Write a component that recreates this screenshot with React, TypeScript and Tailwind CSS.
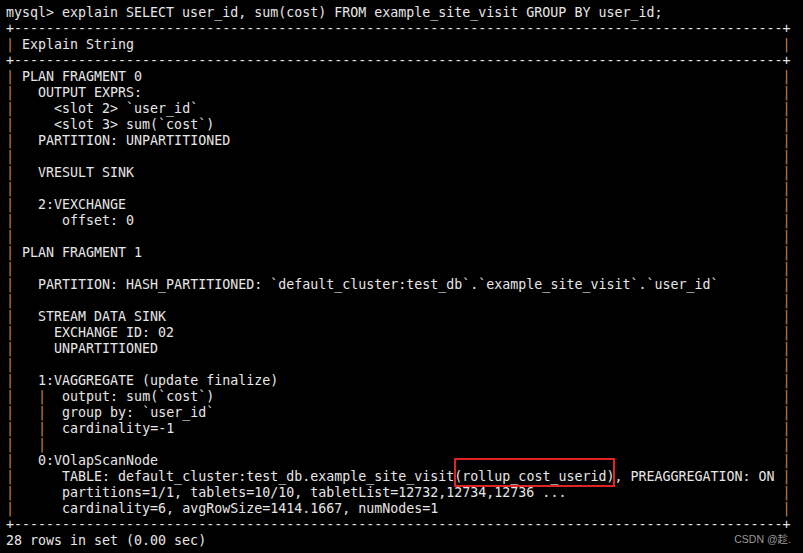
const border = "+" + "-".repeat(96) + "+";

const rows = [
  "PLAN FRAGMENT 0",
  "  OUTPUT EXPRS:",
  "    <slot 2> `user_id`",
  "    <slot 3> sum(`cost`)",
  "  PARTITION: UNPARTITIONED",
  "",
  "  VRESULT SINK",
  "",
  "  2:VEXCHANGE",
  "     offset: 0",
  "",
  "PLAN FRAGMENT 1",
  "",
  "  PARTITION: HASH_PARTITIONED: `default_cluster:test_db`.`example_site_visit`.`user_id`",
  "",
  "  STREAM DATA SINK",
  "    EXCHANGE ID: 02",
  "    UNPARTITIONED",
  "",
  "  1:VAGGREGATE (update finalize)",
  "  |  output: sum(`cost`)",
  "  |  group by: `user_id`",
  "  |  cardinality=-1",
  "  |",
  "  0:VOlapScanNode",
  "TABLE",
  "     partitions=1/1, tablets=10/10, tabletList=12732,12734,12736 ...",
  "     cardinality=6, avgRowSize=1414.1667, numNodes=1",
];

function Pipes({ text }: { text: string }) {
  return (
    <>
      {text.split(/(\|)/).map((part, i) =>
        part === "|" ? (
          <span key={i} className="text-[#c8844a]">|</span>
        ) : (
          <span key={i}>{part}</span>
        )
      )}
    </>
  );
}

function Row({ content }: { content: string }) {
  return (
    <div className="h-4">
      <Pipes text={"| " + content.padEnd(94) + " |"} />
    </div>
  );
}

function TableRow() {
  const tail = ", PREAGGREGATION: ON";
  const before = "     TABLE: default_cluster:test_db.example_site_visit";
  const mark = "(rollup_cost_userid)";
  const pad = " ".repeat(94 - before.length - mark.length - tail.length);
  return (
    <div className="h-4">
      <span className="text-[#c8844a]">|</span>
      {" " + before}
      <span className="relative inline-block h-4">
        {mark}
        <span className="absolute -top-[11px] -bottom-[2px] left-0 -right-[1px] border-2 border-[#e02424]" />
      </span>
      {tail + pad + " "}
      <span className="text-[#c8844a]">|</span>
    </div>
  );
}

export default function App() {
  return (
    <div className="relative w-[803px] h-[553px] overflow-hidden bg-black">
      <div className="pt-[5px] pl-[6px] whitespace-pre text-[13.3px] leading-4 text-[#e6e6e6] font-['DejaVu_Sans_Mono',monospace]">
        <div className="h-4">mysql&gt; explain SELECT user_id, sum(cost) FROM example_site_visit GROUP BY user_id;</div>
        <div className="h-4">{border}</div>
        <Row content="Explain String" />
        <div className="h-4">{border}</div>
        {rows.map((r, i) => (r === "TABLE" ? <TableRow key={i} /> : <Row key={i} content={r} />))}
        <div className="h-4">{border}</div>
        <div className="h-4">28 rows in set (0.00 sec)</div>
      </div>

      {/* watermark */}
      <div className="absolute right-[12px] bottom-[8px] text-[10.5px] leading-[12px] text-[#9a9a9a] font-['Liberation_Sans','Noto_Sans_CJK_SC',sans-serif]">
        CSDN @趁.
      </div>
    </div>
  );
}
